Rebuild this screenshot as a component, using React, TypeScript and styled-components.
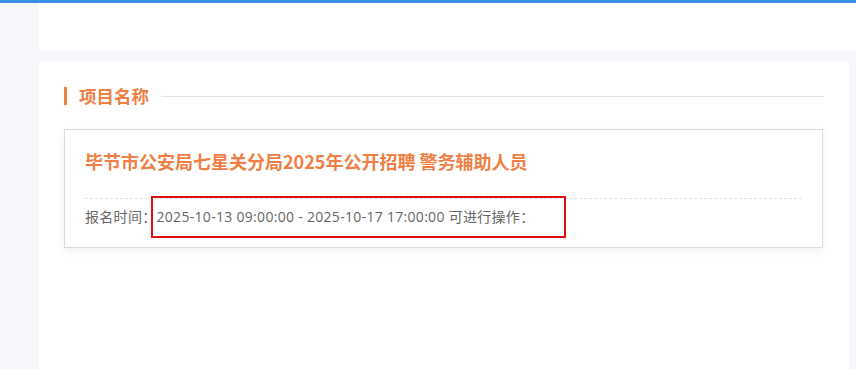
import React from "react";
import styled, { createGlobalStyle } from "styled-components";

const Global = createGlobalStyle`
  html, body { margin: 0; padding: 0; }
  body {
    background: #f5f7fa;
    font-family: "Open Sans", "Noto Sans CJK SC", "Noto Sans", sans-serif;
    width: 856px;
    height: 369px;
    overflow: hidden;
  }
`;

const TopBar = styled.div`
  height: 3px;
  background: #3b8ee8;
`;

const Layout = styled.div`
  display: flex;
  height: 366px;
`;

const Sidebar = styled.aside`
  width: 39px;
  flex-shrink: 0;
  background: #f5f7fa;
`;

const Main = styled.main`
  flex: 1;
  display: flex;
  flex-direction: column;
  gap: 10px;
  background: #f5f7fa;
`;

const Header = styled.div`
  height: 48px;
  background: #ffffff;
`;

const Panel = styled.section`
  flex: 1;
  background: #ffffff;
  margin-right: 7px;
  border-top-right-radius: 4px;
  padding: 25px 25px 0 25px;
`;

const SectionTitle = styled.div`
  display: flex;
  align-items: center;
  gap: 12px;
  height: 20px;
`;

const TitleBar = styled.span`
  width: 3px;
  height: 18px;
  background: #ef7f45;
`;

const TitleText = styled.h2`
  margin: 0;
  font-family: "Noto Sans CJK SC", sans-serif;
  font-size: 17.5px;
  font-weight: 700;
  color: #ef7f45;
  line-height: 20px;
  white-space: nowrap;
`;

const TitleLine = styled.span`
  flex: 1;
  height: 1px;
  background: #e2e2e2;
`;

const Card = styled.div`
  margin-top: 23px;
  margin-right: 1px;
  border: 1px solid #dcdcdc;
  background: #fff;
  box-shadow: 0 3px 8px rgba(0, 0, 0, 0.06);
  padding: 0 20px;
`;

const CardTitle = styled.h3`
  margin: 0;
  padding: 18px 0 24px;
  font-family: "Noto Sans CJK SC", sans-serif;
  font-size: 18px;
  font-weight: 700;
  line-height: 26px;
  color: #ef7f45;
  border-bottom: 1px dashed #e3e3e3;
  white-space: nowrap;
`;

const InfoRow = styled.div`
  padding: 8px 0 20px;
  font-size: 14px;
  letter-spacing: 0.3px;
  line-height: 20px;
  color: #666666;
  white-space: nowrap;
`;

const Highlight = styled.span`
  position: relative;
  &::after {
    content: "";
    position: absolute;
    left: -6px;
    right: -32px;
    top: -11px;
    bottom: -12px;
    border: 2px solid #e01010;
    pointer-events: none;
  }
`;

export default function App() {
  return (
    <>
      <Global />
      <TopBar />
      <Layout>
        <Sidebar />
        <Main>
          <Header />
          <Panel>
            <SectionTitle>
              <TitleBar />
              <TitleText>项目名称</TitleText>
              <TitleLine />
            </SectionTitle>
            <Card>
              <CardTitle>毕节市公安局七星关分局2025年公开招聘 警务辅助人员</CardTitle>
              <InfoRow>
                报名时间：<Highlight>2025-10-13 09:00:00 - 2025-10-17 17:00:00 可进行操作：</Highlight>
              </InfoRow>
            </Card>
          </Panel>
        </Main>
      </Layout>
    </>
  );
}
